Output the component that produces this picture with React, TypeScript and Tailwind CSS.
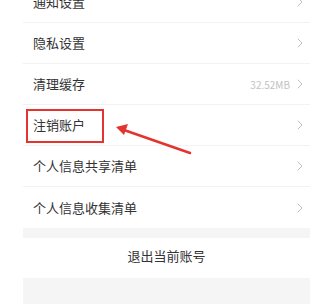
import { ChevronRight } from 'lucide-react'

interface RowProps {
  label: string
  value?: string
  last?: boolean
}

function Row({ label, value, last }: RowProps): React.JSX.Element {
  return (
    <div className={`flex h-[41px] items-center pl-[10px] pr-[2px] ${last ? '' : 'border-b border-[#f2f2f2]'}`}>
      <span className="flex-1 text-[13px] text-[#333]">{label}</span>
      {value && <span className="mr-[2px] text-[10px] text-[#c2c2c2]">{value}</span>}
      <ChevronRight className="h-[16px] w-[16px] text-[#b5b5b5]" strokeWidth={1.3} />
    </div>
  )
}

export default function App(): React.JSX.Element {
  return (
    <div
      className="relative h-[304px] w-[321px] overflow-hidden bg-white"
      style={{ fontFamily: '"Noto Sans CJK SC", "Noto Sans", sans-serif' }}
    >
      <div className="ml-[23px] mr-[11px] mt-[-18px]">
        <Row label="通知设置" />
        <Row label="隐私设置" />
        <Row label="清理缓存" value="32.52MB" />
        <Row label="注销账户" />
        <Row label="个人信息共享清单" />
        <Row label="个人信息收集清单" last />
        <div className="h-[10px] bg-[#f5f5f5]" />
        <div className="flex h-[40px] items-center justify-center pb-[4px] text-[13px] text-[#333]">退出当前账号</div>
        <div className="h-[30px] bg-[#f5f5f5]" />
      </div>

      <div className="absolute left-[26px] top-[109px] h-[34px] w-[78px] border-2 border-[#e3342f]" />
      <svg className="absolute left-0 top-0" width="321" height="304">
        <line x1="190" y1="153" x2="124" y2="130" stroke="#e3342f" strokeWidth="2.5" strokeLinecap="round" />
        <polygon points="116,127 128,124 124,135" fill="#e3342f" />
      </svg>
    </div>
  )
}
